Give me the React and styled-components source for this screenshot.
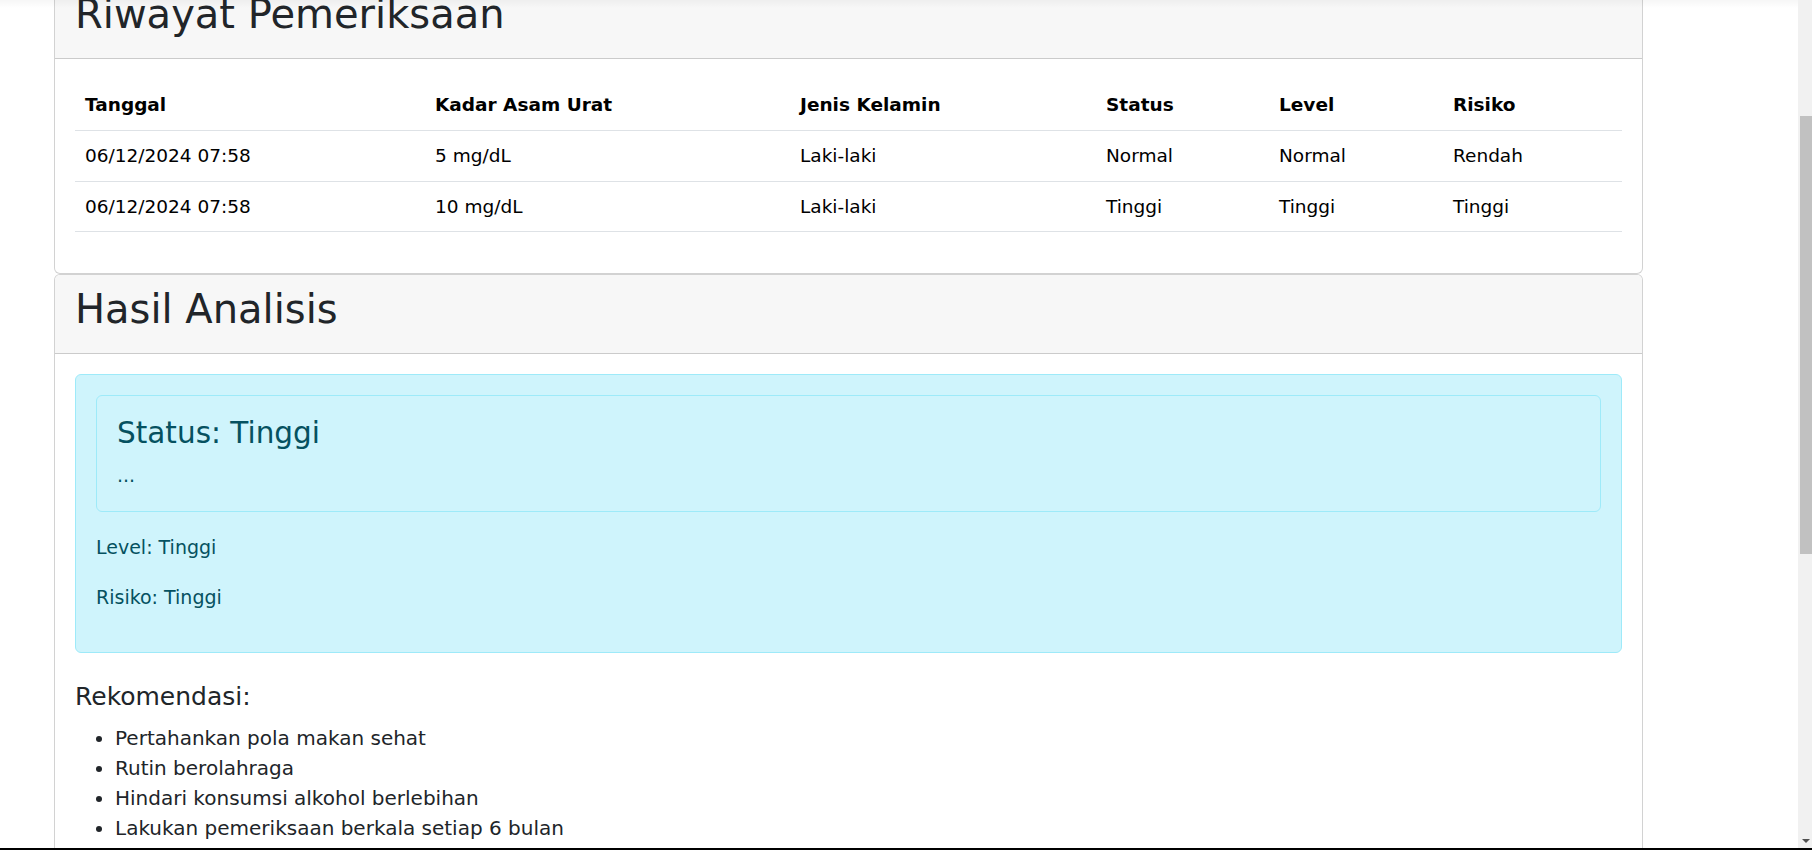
import React, { useLayoutEffect, useRef } from 'react';
import styled, { createGlobalStyle } from 'styled-components';

const GlobalStyle = createGlobalStyle`
    html, body {
        margin: 0;
        padding: 0;
        overflow: hidden;
    }
    body {
        font-family: "DejaVu Sans", "Liberation Sans", sans-serif;
        color: #212529;
        background: #fff;
    }
    * {
        box-sizing: border-box;
    }
`;

const Frame = styled.div`
    position: relative;
    display: flex;
    height: 100vh;
    border-bottom: 2px solid #000;
`;

const Viewport = styled.div`
    flex: 1;
    overflow: hidden;
`;

const TopFade = styled.div`
    position: absolute;
    top: 0;
    left: 0;
    right: 14px;
    height: 8px;
    background: linear-gradient(rgba(0, 0, 0, 0.035), rgba(0, 0, 0, 0));
    pointer-events: none;
`;

const Column = styled.main`
    width: 1589px;
    margin-left: 54px;
`;

const Card = styled.section`
    background: #fff;
    border: 1px solid rgba(0, 0, 0, 0.175);
    border-radius: 6px;
    overflow: hidden;
`;

const CardHeader = styled.div`
    padding: 10px 20px 12px;
    background: #f7f7f7;
    border-bottom: 1px solid rgba(0, 0, 0, 0.175);
`;

const Title = styled.h1`
    margin: 0 0 8px;
    font-size: 40px;
    font-weight: 500;
    line-height: 1.2;
    color: #212529;
`;

const CardBody = styled.div`
    padding: 20px;
`;

const Table = styled.table`
    width: 100%;
    border-collapse: collapse;
    table-layout: fixed;
    margin-bottom: 21px;
    font-size: 18.5px;
    line-height: 1.5;
    color: #000;
`;

const Th = styled.th`
    text-align: left;
    font-weight: 700;
    padding: 12px 10px 11px;
    border-bottom: 1px solid #dee2e6;
`;

const Td = styled.td`
    padding: 11px 10px;
    border-bottom: 1px solid #dee2e6;
`;

const Alert = styled.div`
    background: #cff4fc;
    border: 1px solid #9eeaf9;
    border-radius: 6px;
    padding: 20px;
    margin-bottom: 29px;
    color: #055160;
`;

const StatusBox = styled.div`
    border: 1px solid #9eeaf9;
    border-radius: 6px;
    padding: 20px 20px 21px;
    margin-bottom: 20px;
`;

const StatusHeading = styled.h4`
    margin: 0 0 8px;
    font-size: 29.5px;
    font-weight: 500;
    line-height: 1.2;
`;

const Text = styled.p`
    margin: ${p => (p.$last ? '0' : '0 0 20px')};
    font-size: 19px;
    line-height: 30px;
`;

const SubTitle = styled.h5`
    margin: 0 0 11px;
    font-size: 25px;
    font-weight: 500;
    line-height: 30px;
    color: #212529;
`;

const List = styled.ul`
    margin: 0 0 16px;
    padding-left: 40px;
    font-size: 20px;
    line-height: 30px;
    color: #212529;
`;

const Rail = styled.div`
    width: 14px;
    flex-shrink: 0;
    display: flex;
    flex-direction: column;
    background: #f1f1f1;
`;

const Thumb = styled.div`
    margin: 116px 0 0 2px;
    height: 438px;
    background: #c1c1c1;
`;

const RailGap = styled.div`
    flex: 1;
`;

const RailButton = styled.div`
    height: 15px;
    display: flex;
    align-items: center;
    justify-content: center;
    padding-left: 2px;
`;

const ArrowDown = styled.span`
    width: 0;
    height: 0;
    border-left: 4px solid transparent;
    border-right: 4px solid transparent;
    border-top: 4px solid #505050;
`;

const columns = [350, 365, 306, 173, 174, null];

const history = [
    { date: '06/12/2024 07:58', level: '5 mg/dL', gender: 'Laki-laki', status: 'Normal', grade: 'Normal', risk: 'Rendah' },
    { date: '06/12/2024 07:58', level: '10 mg/dL', gender: 'Laki-laki', status: 'Tinggi', grade: 'Tinggi', risk: 'Tinggi' },
];

const tips = [
    'Pertahankan pola makan sehat',
    'Rutin berolahraga',
    'Hindari konsumsi alkohol berlebihan',
    'Lakukan pemeriksaan berkala setiap 6 bulan',
];

export default function App() {
    const viewRef = useRef(null);

    useLayoutEffect(() => {
        if (viewRef.current) viewRef.current.scrollTop = 21;
    }, []);

    return (
        <>
            <GlobalStyle />
            <Frame>
                <Viewport ref={viewRef}>
                    <Column>
                        <Card>
                            <CardHeader>
                                <Title>Riwayat Pemeriksaan</Title>
                            </CardHeader>
                            <CardBody>
                                <Table>
                                    <colgroup>
                                        {columns.map((w, i) => (
                                            <col key={i} style={w ? { width: w } : undefined} />
                                        ))}
                                    </colgroup>
                                    <thead>
                                        <tr>
                                            <Th>Tanggal</Th>
                                            <Th>Kadar Asam Urat</Th>
                                            <Th>Jenis Kelamin</Th>
                                            <Th>Status</Th>
                                            <Th>Level</Th>
                                            <Th>Risiko</Th>
                                        </tr>
                                    </thead>
                                    <tbody>
                                        {history.map((row, i) => (
                                            <tr key={i}>
                                                <Td>{row.date}</Td>
                                                <Td>{row.level}</Td>
                                                <Td>{row.gender}</Td>
                                                <Td>{row.status}</Td>
                                                <Td>{row.grade}</Td>
                                                <Td>{row.risk}</Td>
                                            </tr>
                                        ))}
                                    </tbody>
                                </Table>
                            </CardBody>
                        </Card>

                        <Card>
                            <CardHeader>
                                <Title>Hasil Analisis</Title>
                            </CardHeader>
                            <CardBody>
                                <Alert>
                                    <StatusBox>
                                        <StatusHeading>Status: Tinggi</StatusHeading>
                                        <Text $last>...</Text>
                                    </StatusBox>
                                    <Text>Level: Tinggi</Text>
                                    <Text>Risiko: Tinggi</Text>
                                </Alert>
                                <SubTitle>Rekomendasi:</SubTitle>
                                <List>
                                    {tips.map(t => (
                                        <li key={t}>{t}</li>
                                    ))}
                                </List>
                            </CardBody>
                        </Card>
                    </Column>
                </Viewport>
                <Rail>
                    <Thumb />
                    <RailGap />
                    <RailButton>
                        <ArrowDown />
                    </RailButton>
                </Rail>
                <TopFade />
            </Frame>
        </>
    );
}
